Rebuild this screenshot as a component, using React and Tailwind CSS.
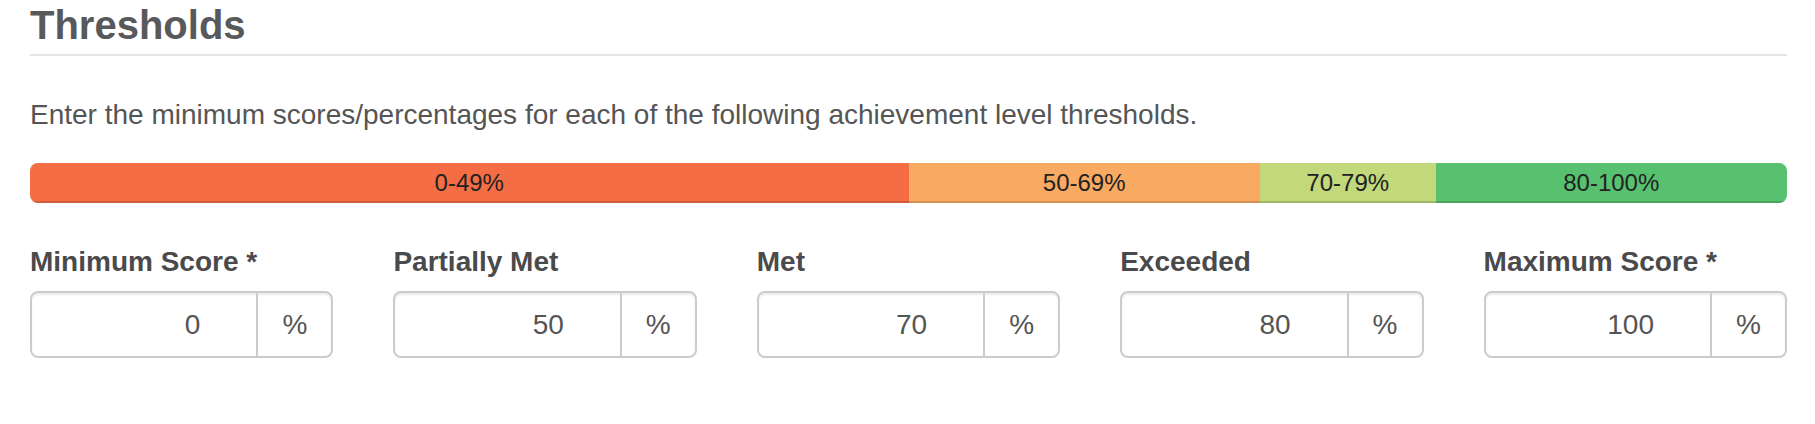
import React from 'react';

const levels = [
  { label: '0-49%', width: 'w-[50%]', color: 'bg-[#f46d45]' },
  { label: '50-69%', width: 'w-[20%]', color: 'bg-[#f8aa62]' },
  { label: '70-79%', width: 'w-[10%]', color: 'bg-[#c1d87b]' },
  { label: '80-100%', width: 'w-[20%]', color: 'bg-[#57c16f]' },
];

const fields = [
  { label: 'Minimum Score *', value: '0' },
  { label: 'Partially Met', value: '50' },
  { label: 'Met', value: '70' },
  { label: 'Exceeded', value: '80' },
  { label: 'Maximum Score *', value: '100' },
];

const ThresholdInput = ({ label, value }) => (
  <div className="w-1/5 px-[30px]">
    <label className="block mb-[9px] text-[28px] leading-[40px] font-bold text-[#4a4a4c]">
      {label}
    </label>
    <div className="flex h-[67px] border-2 border-[#ccc] rounded-[8px] bg-white shadow-[inset_0_2px_2px_rgba(0,0,0,0.075)]">
      <input
        type="text"
        readOnly
        value={value}
        className="min-w-0 flex-1 bg-transparent pr-[56px] text-right text-[28px] text-[#555] outline-none"
      />
      <span className="flex w-[75px] items-center justify-center border-l-2 border-[#ccc] text-[28px] text-[#555]">
        %
      </span>
    </div>
  </div>
);

export default function App() {
  return (
    <div className="w-[1815px] bg-white pl-[30px] pr-[28px] pt-[3px] pb-[64px] font-['Liberation_Sans',Arial,sans-serif]">
      <h2 className="border-b-2 border-[#e5e5e5] pb-[7px] text-[40px] leading-[44px] font-bold text-[#58595b]">
        Thresholds
      </h2>

      <p className="mt-[39px] text-[28px] leading-[40px] text-[#555]">
        Enter the minimum scores/percentages for each of the following achievement level thresholds.
      </p>

      {/* achievement bands */}
      <div className="mt-[28px] flex h-[40px] overflow-hidden rounded-[8px]">
        {levels.map((level) => (
          <div
            key={level.label}
            className={`${level.width} ${level.color} flex items-center justify-center text-[24px] leading-[40px] text-[#222] shadow-[inset_0_-2px_0_rgba(0,0,0,0.15)]`}
          >
            {level.label}
          </div>
        ))}
      </div>

      <div className="mt-[39px] -mx-[30px] flex">
        {fields.map((field) => (
          <ThresholdInput key={field.label} label={field.label} value={field.value} />
        ))}
      </div>
    </div>
  );
}
